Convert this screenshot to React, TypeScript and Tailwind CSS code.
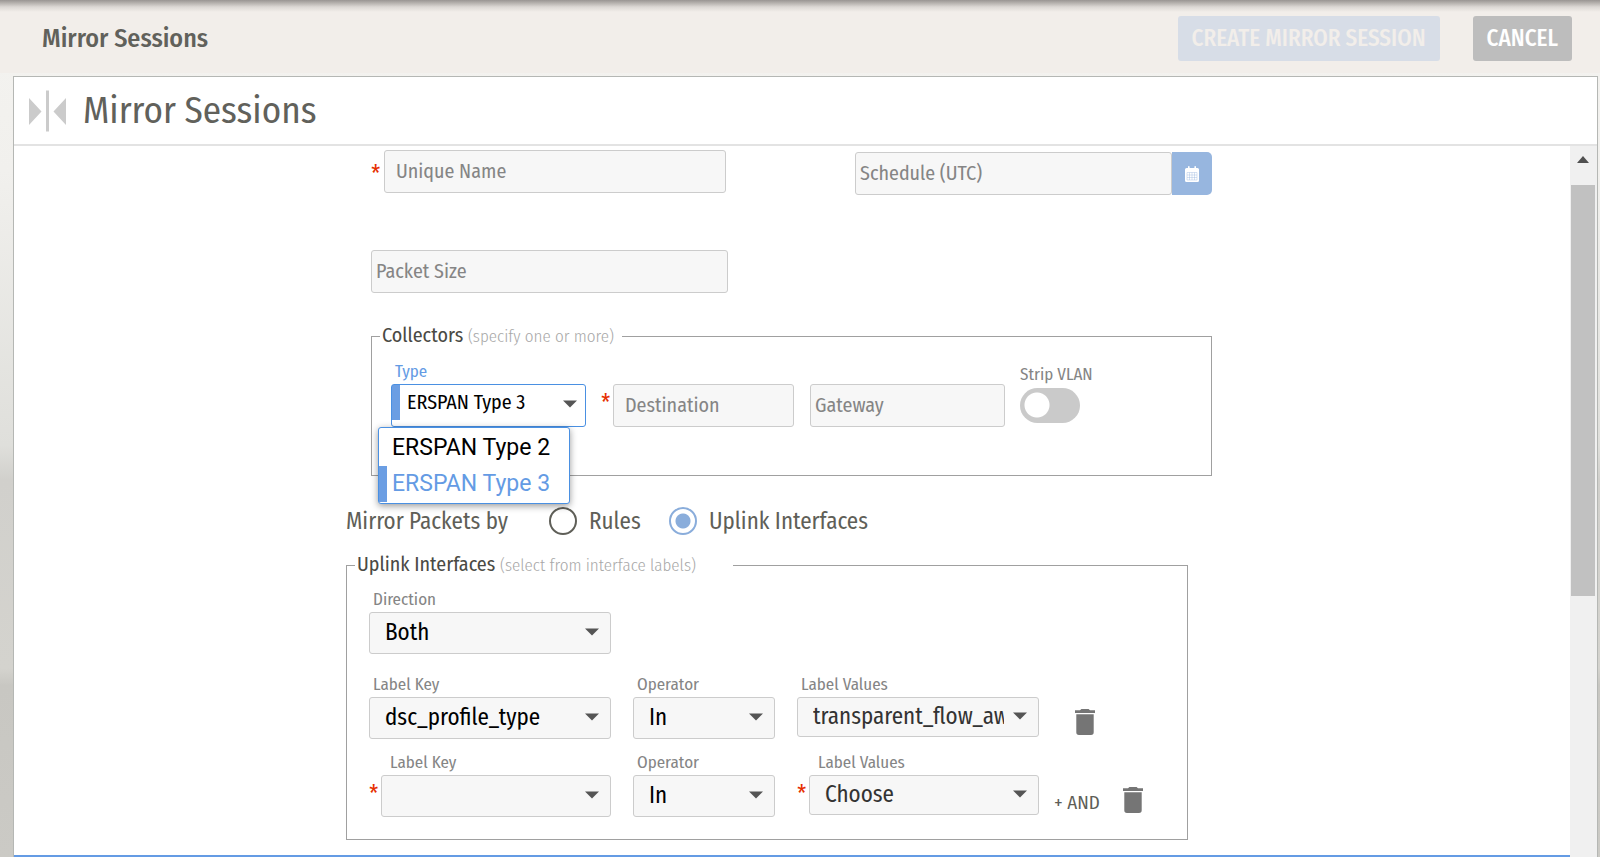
import { useState, type ReactNode } from "react";

function Caret({ className = "" }: { className?: string }) {
  return (
    <svg viewBox="0 0 14 8" className={`pointer-events-none absolute h-2 w-3.5 fill-[#555555] ${className}`} aria-hidden="true">
      <path d="M0 0.5h14L7 7.5z" />
    </svg>
  );
}

function TrashIcon() {
  return (
    <svg viewBox="0 0 20 26" className="h-[26px] w-5 fill-[#757575]" aria-hidden="true">
      <path d="M1.300 5.300h17.400v18a2.700 2.700 0 0 1-2.700 2.700H4a2.700 2.700 0 0 1-2.700-2.700zM20 1.200V4H0V1.200h5L6.400 0h7.200L15 1.200z" />
    </svg>
  );
}

function Required() {
  return (
    <span className="text-[23px] leading-[22px] text-[#e62e00]" aria-hidden="true">
      *
    </span>
  );
}

interface SelectFieldProps {
  id: string;
  label: string;
  options: string[];
  width: string;
  required?: boolean;
  multi?: boolean;
}

function SelectField({ id, label, options, width, required = false, multi = false }: SelectFieldProps) {
  return (
    <div className={`flex flex-col ${width}`}>
      <label htmlFor={id} className={`h-6 text-[17px] leading-6 text-[#858585] ${required ? "pl-[21px]" : "pl-1"}`}>
        {label}
      </label>
      <div className="flex">
        {required && (
          <div className="w-3 shrink-0 pt-2">
            <Required />
          </div>
        )}
        <div className="relative flex-1">
          <select
            id={id}
            className={`block w-full appearance-none rounded-[3px] border border-[#cccccc] bg-[#f7f7f7] pr-[34px] pb-0.5 pl-[15px] text-[23px] leading-7 ${multi ? "h-10 text-[#333333]" : "h-[42px] text-black"}`}
          >
            {options.map((o) => (
              <option key={o}>{o}</option>
            ))}
          </select>
          <Caret className={multi ? "top-[15px] right-3" : "top-4 right-3"} />
        </div>
      </div>
    </div>
  );
}

function TextField({ label, padding, className = "" }: { label: string; padding: string; className?: string }) {
  return (
    <input
      type="text"
      aria-label={label}
      placeholder={label}
      className={`block h-[43px] min-w-0 rounded-[3px] border border-[#cccccc] bg-[#f7f7f7] pb-0.5 text-[20px] text-[#333333] placeholder:text-[#858585] ${padding} ${className}`}
    />
  );
}

function Group({ title, hint, legendClass, className, children }: { title: string; hint: string; legendClass: string; className: string; children: ReactNode }) {
  return (
    <fieldset className={`border border-[#a0a0a0] ${className}`}>
      <legend className={`ml-2 px-0.5 text-[20px] leading-6 text-[#4a4a44] ${legendClass}`}>
        {title} <span className="text-[17px] font-light text-[#a8a8a8]">{hint}</span>
      </legend>
      {children}
    </fieldset>
  );
}

function Radio({ label, checked, onChange, className = "" }: { label: string; checked: boolean; onChange: () => void; className?: string }) {
  return (
    <label className={`flex items-center text-[#5f5f58] ${className}`}>
      <input
        type="radio"
        name="mirror-by"
        checked={checked}
        onChange={onChange}
        className="mr-3 size-7 appearance-none rounded-full border-[2px] border-[#5f5f58] checked:border-[#8aaddb] checked:bg-[radial-gradient(circle,#8aaddb_7px,transparent_8px)]"
      />
      {label}
    </label>
  );
}

const types = ["ERSPAN Type 2", "ERSPAN Type 3"];

export default function App() {
  const [type, setType] = useState(types[1]);
  const [by, setBy] = useState("uplink");

  return (
    <div className="flex h-screen flex-col overflow-hidden bg-[linear-gradient(#f4f3f0_0%,#f1f0ed_20%,#dfdfdb_52%,#d1d0cc_56%,#d4d3ce_78%,#c8c7c2_80%,#cbcac5_100%)] font-['Fira_Sans_Condensed','Roboto_Condensed',sans-serif]">
      <header className="flex h-[73px] shrink-0 items-start bg-[#f2eeea] bg-[linear-gradient(#999593_0px,#b5b1ae_3px,#dcd8d5_7px,#f2eeea_12px)] pt-4 pr-7 pl-[42px]">
        <h2 className="flex-1 text-[26px] leading-[45px] font-medium text-[#61615b]">Mirror Sessions</h2>
        <button type="button" disabled className="mr-[33px] h-[45px] rounded-[3px] bg-[#d7dde7] px-3.5 text-[23px] font-medium text-[#f2eeea]">
          CREATE MIRROR SESSION
        </button>
        <button type="button" className="h-[45px] rounded-[3px] bg-[#bdbdbd] px-3.5 text-[23px] font-medium text-white">
          CANCEL
        </button>
      </header>

      <main className="mt-[3px] mr-0.5 ml-[13px] flex min-h-0 flex-1 flex-col border border-b-0 border-[#b5b7b4] bg-white">
        <div className="flex h-[69px] shrink-0 items-center border-b-2 border-[#e3e3e3] pl-[15px]">
          <svg viewBox="0 0 37 42" className="h-[42px] w-[37px] fill-[#cbcbcb]" aria-hidden="true">
            <path d="M0 8v27l12.500-13.500zM37 8v27L24.500 21.500zM17 0.500h3v41h-3z" />
          </svg>
          <h1 className="pl-[17px] text-[37px] leading-[48px] text-[#61615b]">Mirror Sessions</h1>
        </div>

        <div className="flex min-h-0 flex-1">
          <div className="flex min-w-0 flex-1 flex-col">
            <form className="mx-auto min-h-0 w-full max-w-[892px] flex-1 overflow-hidden pt-1" onSubmit={(e) => e.preventDefault()}>
              <div className="pr-[26px] pl-[25px]">
                <div className="flex items-start justify-between">
                  <div className="flex w-[355px]">
                    <div className="w-[13px] shrink-0 pt-[13px]">
                      <Required />
                    </div>
                    <TextField label="Unique Name" padding="px-[11px]" className="flex-1" />
                  </div>
                  <div className="mt-0.5 flex w-[357px]">
                    <TextField label="Schedule (UTC)" padding="px-1" className="flex-1" />
                    <button type="button" aria-label="Open calendar" className="flex w-10 items-center justify-center rounded-r-[5px] bg-[#97b6df]">
                      <svg viewBox="0 0 14 16" className="h-4 w-3.5" aria-hidden="true">
                        <path fill="#fff" d="M1.500 2H3V.8a.8.8 0 0 1 1.600 0V2h4.800V.8a.8.8 0 0 1 1.600 0V2h1.500A1.500 1.500 0 0 1 14 3.500v11a1.500 1.500 0 0 1-1.500 1.500h-11A1.500 1.500 0 0 1 0 14.500v-11A1.500 1.500 0 0 1 1.500 2z" />
                        <path stroke="#97b6df" strokeWidth=".4" fill="none" d="M2 6.500h10v7.500H2zM2 9h10M2 11.500h10M4.500 6.500V14M7 6.500V14M9.500 6.500V14" />
                      </svg>
                    </button>
                  </div>
                </div>

                <div className="mt-[55px] flex w-[357px]">
                  <TextField label="Packet Size" padding="px-1" className="flex-1" />
                </div>

                <Group title="Collectors" hint="(specify one or more)" legendClass="w-[242px]" className="mt-[30px] h-[153px]">
                  <div className="flex pt-[11px] pl-[19px]">
                    <div className="relative w-[195px]">
                      <label htmlFor="type" className="block h-6 pl-1 text-[17px] leading-6 text-[#649be4]">
                        Type
                      </label>
                      <div className="relative">
                        <select
                          id="type"
                          value={type}
                          onChange={(e) => setType(e.target.value)}
                          className="block h-[43px] w-full appearance-none rounded-[3px] border border-[#4a90e2] bg-[linear-gradient(#6b9ee3,#6b9ee3)] bg-[length:8px_35px] bg-no-repeat pr-8 pb-2 pl-[15px] text-[20px] text-black outline-none"
                        >
                          {types.map((t) => (
                            <option key={t}>{t}</option>
                          ))}
                        </select>
                        <Caret className="top-4 right-[9px]" />
                      </div>
                      <ul role="listbox" aria-label="Type options" className="absolute top-[67px] -left-[13px] z-10 w-48 rounded-[3px] border border-[#4a90e2] bg-white pt-0.5 pb-px font-[Roboto] text-[23px] leading-9 shadow-[0_2px_7px_rgba(0,0,0,0.4)]">
                        {types.map((t) => (
                          <li
                            key={t}
                            role="option"
                            aria-selected={t === type}
                            onClick={() => setType(t)}
                            className={t === type ? "border-l-8 border-[#6b9ee3] pl-[5px] text-[#649be4]" : "pl-[13px] text-black"}
                          >
                            {t}
                          </li>
                        ))}
                      </ul>
                    </div>
                    <div className="mt-6 ml-[15px] flex w-[193px]">
                      <div className="w-3 shrink-0 pt-2">
                        <Required />
                      </div>
                      <TextField label="Destination" padding="px-[11px]" className="w-[181px]" />
                    </div>
                    <div className="mt-6 ml-4 flex w-[195px]">
                      <TextField label="Gateway" padding="px-1" className="flex-1" />
                    </div>
                    <label className="ml-[15px] pt-[3px] text-[17px] leading-6 text-[#858585]">
                      Strip VLAN
                      <input
                        type="checkbox"
                        role="switch"
                        className="mt-px block h-[35px] w-[60px] appearance-none rounded-full bg-[#cacaca] bg-[radial-gradient(circle_at_17px_17px,#ffffff_12px,transparent_13px)]"
                      />
                    </label>
                  </div>
                </Group>
              </div>

              <div className="pr-[50px]">
                <div className="mt-[31px] flex h-7 items-center text-[23px] text-[#5f5f58]" role="radiogroup" aria-label="Mirror Packets by">
                  <span className="w-[203px]">Mirror Packets by</span>
                  <Radio label="Rules" checked={by === "rules"} onChange={() => setBy("rules")} className="w-[120px]" />
                  <Radio label="Uplink Interfaces" checked={by === "uplink"} onChange={() => setBy("uplink")} />
                </div>

                <Group title="Uplink Interfaces" hint="(select from interface labels)" legendClass="w-[378px]" className="mt-[17px] h-[288px]">
                  <div className="pt-[10px] pl-[22px]">
                    <SelectField id="direction" label="Direction" options={["Both", "Ingress", "Egress"]} width="w-[242px]" />
                    <div className="mt-[19px] flex">
                      <SelectField id="key-1" label="Label Key" options={["dsc_profile_type"]} width="w-[242px]" />
                      <SelectField id="op-1" label="Operator" options={["In", "Not In"]} width="ml-[22px] w-[142px]" />
                      <SelectField id="val-1" label="Label Values" options={["transparent_flow_aware"]} width="ml-[22px] w-[242px]" multi />
                      <button type="button" aria-label="Delete row" className="mt-9 ml-9 self-start">
                        <TrashIcon />
                      </button>
                    </div>
                    <div className="mt-3 flex">
                      <SelectField id="key-2" label="Label Key" options={[""]} width="w-[242px]" required />
                      <SelectField id="op-2" label="Operator" options={["In", "Not In"]} width="ml-[22px] w-[142px]" />
                      <SelectField id="val-2" label="Label Values" options={["Choose"]} width="ml-[22px] w-[242px]" required multi />
                      <button type="button" className="mt-[38px] ml-[15px] self-start text-[19px] leading-7 text-[#5f5f58]">
                        + AND
                      </button>
                      <button type="button" aria-label="Delete row" className="mt-9 ml-[23px] self-start">
                        <TrashIcon />
                      </button>
                    </div>
                  </div>
                </Group>
              </div>
            </form>
            <div className="h-0.5 shrink-0 bg-[#649be4]" />
          </div>

          <div className="flex w-[27px] shrink-0 flex-col items-start bg-[#f0f0f0] pl-px" aria-hidden="true">
            <div className="flex h-[39px] w-6 items-start justify-center pt-[10px]">
              <svg viewBox="0 0 12 7" className="h-[7px] w-3 fill-[#505050]">
                <path d="M6 0l6 7H0z" />
              </svg>
            </div>
            <div className="h-[411px] w-6 bg-[#c1c1c1]" />
          </div>
        </div>
      </main>
    </div>
  );
}
